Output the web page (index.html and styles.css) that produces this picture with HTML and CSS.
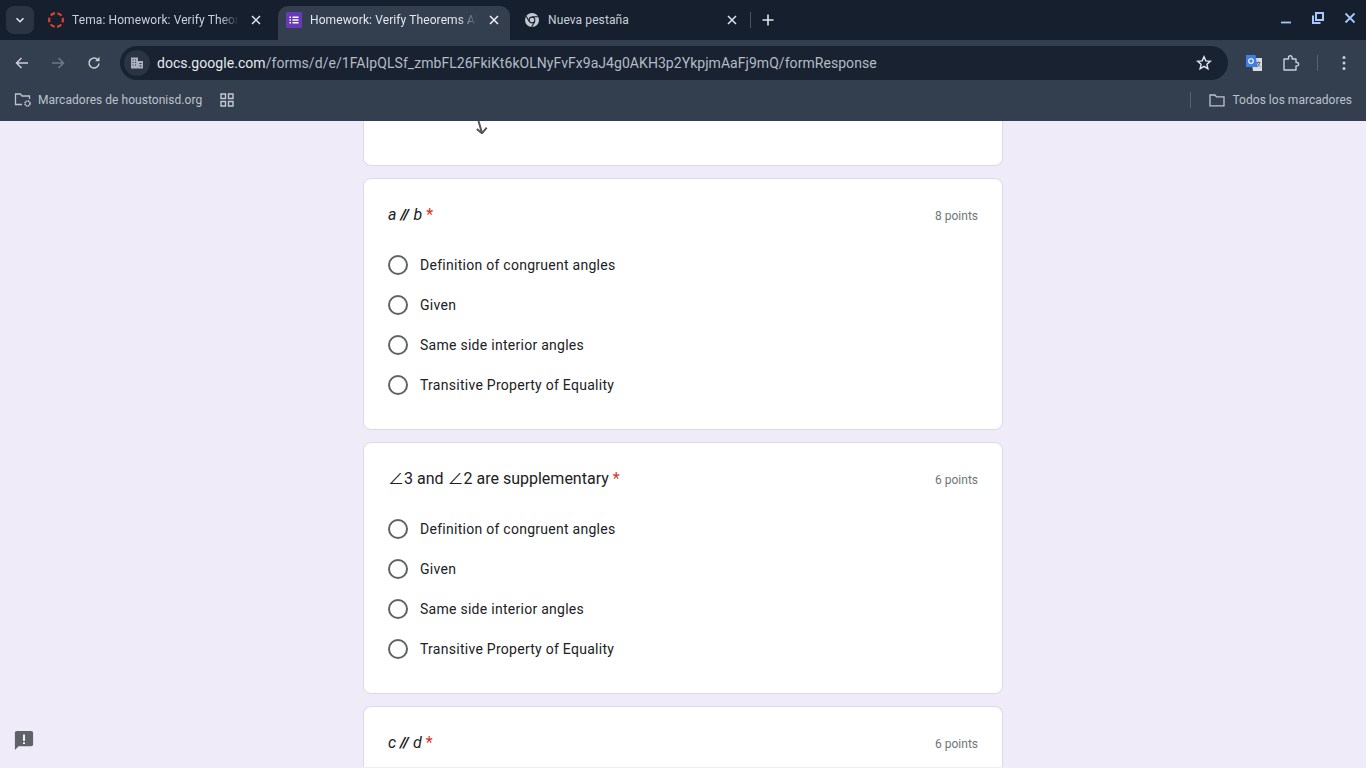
FILE: index.html
```html
<!DOCTYPE html>
<html lang="es">
<head>
    <meta charset="UTF-8">
    <title>Homework: Verify Theorems</title>
    <link rel="stylesheet" href="styles.css">
</head>
<body>
    <header class="browser">
        <div class="tab-strip">
            <button class="tab-search">
                <svg width="12" height="12" viewBox="0 0 12 12"><path d="M2.500 4.200 6 7.700l3.500-3.500" fill="none" stroke="#dfe5ee" stroke-width="1.600"/></svg>
            </button>
            <div class="tab tab-first">
                <svg class="favicon" width="16" height="16" viewBox="0 0 16 16"><circle cx="8" cy="8" r="6.900" fill="none" stroke="#dc4030" stroke-width="2.200" stroke-dasharray="4.800 2.420" stroke-dashoffset="2.400"/></svg>
                <span class="tab-title">Tema: Homework: Verify Theor</span>
                <svg class="tab-close" width="10" height="10" viewBox="0 0 10 10"><path d="M1 1l8 8M9 1 1 9" stroke="#dfe5ee" stroke-width="1.500"/></svg>
            </div>
            <div class="tab tab-active">
                <svg class="favicon" width="16" height="16" viewBox="0 0 16 16"><rect width="16" height="16" rx="1" fill="#673ab7"/><path d="M3.500 4.500H5V6H3.500zM6.500 4.500h6V6h-6zM3.500 7.300H5v1.500H3.500zM6.500 7.300h6v1.500h-6zM3.500 10H5v1.500H3.500zM6.500 10h6v1.500h-6z" fill="#fff"/></svg>
                <span class="tab-title">Homework: Verify Theorems Al</span>
                <svg class="tab-close" width="10" height="10" viewBox="0 0 10 10"><path d="M1 1l8 8M9 1 1 9" stroke="#f1f4f8" stroke-width="1.500"/></svg>
            </div>
            <div class="tab tab-last">
                <svg class="favicon" width="16" height="16" viewBox="0 0 16 16"><circle cx="8" cy="8" r="7" fill="#c3c9d2"/><circle cx="8" cy="8" r="3.400" fill="#1a2433"/><circle cx="8" cy="8" r="2.300" fill="#c3c9d2"/><path d="M8 4.800h6.300M5.200 9.600 2.200 4.200M10.800 9.600 7.600 15" stroke="#1a2433" stroke-width="1.100"/></svg>
                <span class="tab-title">Nueva pestaña</span>
                <svg class="tab-close" width="10" height="10" viewBox="0 0 10 10"><path d="M1 1l8 8M9 1 1 9" stroke="#dfe5ee" stroke-width="1.500"/></svg>
            </div>
            <span class="tab-sep"></span>
            <svg class="new-tab" width="12" height="12" viewBox="0 0 12 12"><path d="M6 .5v11M.5 6h11" stroke="#dfe5ee" stroke-width="1.600"/></svg>
            <div class="window-controls">
                <svg width="12" height="12" viewBox="0 0 12 12"><path d="M1 10.500h10" stroke="#a8c7fa" stroke-width="1.800"/></svg>
                <svg width="12" height="12" viewBox="0 0 12 12"><path d="M4 1h7v7H4zM1 3.500V11h7.500" fill="none" stroke="#a8c7fa" stroke-width="2"/></svg>
                <svg width="12" height="12" viewBox="0 0 12 12"><path d="m1.500 1.500 9 9M10.500 1.500l-9 9" stroke="#a8c7fa" stroke-width="1.800"/></svg>
            </div>
        </div>

        <div class="toolbar">
            <svg class="nav-icon" width="16" height="16" viewBox="0 0 16 16"><path d="M14 8H2.500M7.500 3l-5 5 5 5" fill="none" stroke="#c9cfd8" stroke-width="1.500"/></svg>
            <svg class="nav-icon" width="16" height="16" viewBox="0 0 16 16"><path d="M2 8h11.500M8.500 3l5 5-5 5" fill="none" stroke="#6f7986" stroke-width="1.500"/></svg>
            <svg class="nav-icon" width="16" height="16" viewBox="0 0 16 16"><path d="M13 8.500A5 5 0 1 1 11.500 4.500" fill="none" stroke="#c9cfd8" stroke-width="1.500"/><path d="M13.500 1.800v4.400H9.100z" fill="#c9cfd8"/></svg>
            <div class="omnibox">
                <span class="site-icon">
                    <svg width="14" height="14" viewBox="0 0 14 14"><path d="M1 1.500h7v11H1zM8 5h5v7.500H8z" fill="#aab2bd"/><path d="M2.500 3.500h1v1h-1zM5 3.500h1v1H5zM2.500 6h1v1h-1zM5 6h1v1H5zM2.500 8.500h1v1h-1zM5 8.500h1v1H5zM9.500 7h2v1h-2zM9.500 9.500h2v1h-2z" fill="#2a3443"/></svg>
                </span>
                <span class="url">docs.google.com<span class="url-path">/forms/d/e/1FAIpQLSf_zmbFL26FkiKt6kOLNyFvFx9aJ4g0AKH3p2YkpjmAaFj9mQ/formResponse</span></span>
                <svg class="star" width="16" height="16" viewBox="0 0 16 16"><path d="m8 1.800 1.800 4.100 4.500.4-3.400 3 1 4.400L8 11.400l-3.900 2.300 1-4.400-3.400-3 4.500-.4z" fill="none" stroke="#e3e7ed" stroke-width="1.400"/></svg>
            </div>
            <div class="toolbar-actions">
                <svg width="18" height="18" viewBox="0 0 18 18"><path d="M6 4h11v13H8z" fill="#d9dde2"/><path d="M1 1h9.500l2 12H1z" fill="#3f7de8"/><circle cx="6" cy="7" r="2.300" fill="none" stroke="#fff" stroke-width="1.100"/><path d="M11.500 8.500h4M13.500 7.500v1M12.500 8.500c.3 2 1.500 3.500 3 4.500M14.800 8.500c-.4 2-1.500 3.500-3 4.500" fill="none" stroke="#5d6570" stroke-width=".9"/></svg>
                <svg width="18" height="18" viewBox="0 0 18 18"><path d="M2 5h4.500V3.500a1.800 1.800 0 0 1 3.600 0V5H14v3.500h1a1.700 1.700 0 0 1 0 3.400h-1V16H2z" fill="none" stroke="#c9cfd8" stroke-width="1.400" stroke-linejoin="round"/></svg>
                <span class="action-sep"></span>
                <svg width="4" height="16" viewBox="0 0 4 16"><circle cx="2" cy="2.500" r="1.500" fill="#c9cfd8"/><circle cx="2" cy="8" r="1.500" fill="#c9cfd8"/><circle cx="2" cy="13.500" r="1.500" fill="#c9cfd8"/></svg>
            </div>
        </div>

        <div class="bookmarks">
            <div class="bookmark">
                <svg width="18" height="16" viewBox="0 0 18 16"><path d="M8 12.500H1.500V2h5L8 4h7.500v3" fill="none" stroke="#bcc3cd" stroke-width="1.300"/><circle cx="13.500" cy="11.500" r="2.500" fill="none" stroke="#bcc3cd" stroke-width="1.600" stroke-dasharray="1.500 .5"/></svg>
                <span>Marcadores de houstonisd.org</span>
            </div>
            <svg class="apps" width="14" height="14" viewBox="0 0 14 14"><path d="M1 1h4.500v4.500H1zM8.500 1H13v4.500H8.500zM1 8.500h4.500V13H1zM8.500 8.500H13V13H8.500z" fill="none" stroke="#c4cad3" stroke-width="1.400"/></svg>
            <div class="bookmarks-right">
                <span class="bookmark-sep"></span>
                <svg width="16" height="14" viewBox="0 0 16 14"><path d="M1 2h5l1.500 1.800H15v9H1z" fill="none" stroke="#bcc3cd" stroke-width="1.300"/></svg>
                <span>Todos los marcadores</span>
            </div>
        </div>
    </header>

    <main class="form-page">
        <div class="card card-cut">
            <svg width="12" height="13" viewBox="0 0 12 13"><path d="M2.500 0 6 12M.8 8 6 12.300l4.700-5.600" fill="none" stroke="#555" stroke-width="2"/></svg>
        </div>

        <section class="card">
            <div class="question">
                <span class="q-title"><i>a</i> <i class="par">//</i> <i>b</i> <span class="req">*</span></span>
                <span class="points">8 points</span>
            </div>
            <label class="option"><span class="radio"></span>Definition of congruent angles</label>
            <label class="option"><span class="radio"></span>Given</label>
            <label class="option"><span class="radio"></span>Same side interior angles</label>
            <label class="option"><span class="radio"></span>Transitive Property of Equality</label>
        </section>

        <section class="card">
            <div class="question">
                <span class="q-title"><span class="ang">∠</span>3 and <span class="ang">∠</span>2 are supplementary <span class="req">*</span></span>
                <span class="points">6 points</span>
            </div>
            <label class="option"><span class="radio"></span>Definition of congruent angles</label>
            <label class="option"><span class="radio"></span>Given</label>
            <label class="option"><span class="radio"></span>Same side interior angles</label>
            <label class="option"><span class="radio"></span>Transitive Property of Equality</label>
        </section>

        <section class="card card-last">
            <div class="question">
                <span class="q-title"><i>c</i> <i class="par">//</i> <i>d</i> <span class="req">*</span></span>
                <span class="points">6 points</span>
            </div>
        </section>
    </main>

    <svg class="report" width="20" height="20" viewBox="0 0 22 22"><path d="M3 1h16a2 2 0 0 1 2 2v13a2 2 0 0 1-2 2H5l-4 4V3a2 2 0 0 1 2-2z" fill="#5f6368"/><path d="M10 5h2v7h-2zM10 13.500h2v2h-2z" fill="#fff"/></svg>
</body>
</html>
```

FILE: styles.css
```css
body, html {
    margin: 0;
    padding: 0;
    height: 100%;
    overflow: hidden;
    background-color: #f0ebf8;
    font-family: 'Roboto', sans-serif;
}
body {
    display: flex;
    flex-direction: column;
}

/* browser chrome */
.browser {
    flex: none;
    height: 121px;
    background-color: #333e4e;
}
.tab-strip {
    display: flex;
    align-items: center;
    height: 40px;
    padding-left: 6px;
    background-color: #151f2e;
    color: #c9d0da;
    font-size: 12px;
}
.tab-search {
    flex: none;
    width: 28px;
    height: 28px;
    padding: 0;
    margin-right: 2px;
    border: 0;
    border-radius: 8px;
    background-color: #2a3443;
    display: flex;
    align-items: center;
    justify-content: center;
}
.tab {
    flex: none;
    box-sizing: border-box;
    display: flex;
    align-items: center;
    height: 34px;
    margin-top: 6px;
    padding-bottom: 6px;
}
.tab-first {
    width: 242px;
    padding-left: 12px;
    padding-right: 17px;
}
.tab-active {
    width: 232px;
    padding-left: 8px;
    padding-right: 11px;
    background-color: #333e4e;
    border-radius: 10px 10px 0 0;
    color: #e3e7ed;
}
.tab-last {
    width: 238px;
    padding-left: 14px;
    padding-right: 11px;
}
.favicon {
    flex: none;
    margin-right: 8px;
}
.tab-title {
    flex: 1;
    min-width: 0;
    overflow: hidden;
    white-space: nowrap;
    letter-spacing: .1px;
    -webkit-mask-image: linear-gradient(to left, transparent 0, #000 18px);
    mask-image: linear-gradient(to left, transparent 0, #000 18px);
}
.tab-last .tab-title {
    -webkit-mask-image: none;
    mask-image: none;
}
.tab-close {
    flex: none;
    margin-left: 12px;
}
.tab-sep {
    flex: none;
    width: 1px;
    height: 16px;
    margin-left: 2px;
    background-color: #4a5463;
}
.new-tab {
    flex: none;
    margin-left: 11px;
}
.window-controls {
    margin-left: auto;
    display: flex;
    align-items: center;
    gap: 20px;
    padding-right: 10px;
    margin-top: -4px;
}

.toolbar {
    display: flex;
    align-items: center;
    box-sizing: border-box;
    height: 44px;
    padding: 2px 0 0 14px;
    gap: 20px;
}
.omnibox {
    flex: none;
    display: flex;
    align-items: center;
    box-sizing: border-box;
    width: 1108px;
    height: 34px;
    margin-left: -2px;
    padding: 0 16px 0 4px;
    background-color: #182231;
    border-radius: 17px;
    font-size: 14px;
}
.site-icon {
    flex: none;
    width: 26px;
    height: 26px;
    margin-right: 7px;
    border-radius: 50%;
    background-color: #2a3443;
    display: flex;
    align-items: center;
    justify-content: center;
}
.url {
    flex: 1;
    white-space: nowrap;
    color: #e6e9ee;
    letter-spacing: .05px;
}
.url-path {
    color: #b4bbc5;
}
.toolbar-actions {
    display: flex;
    align-items: center;
    margin-left: -3px;
}
.toolbar-actions svg:nth-child(2) {
    margin-left: 19px;
}
.action-sep {
    width: 1px;
    height: 16px;
    margin: 0 24px 0 17px;
    background-color: #556070;
}

.bookmarks {
    display: flex;
    align-items: center;
    box-sizing: border-box;
    height: 37px;
    padding: 0 14px 5px;
    color: #bcc3cd;
    font-size: 12px;
}
.bookmark {
    display: flex;
    align-items: center;
    gap: 6px;
    letter-spacing: .04px;
}
.apps {
    margin-left: 18px;
}
.bookmarks-right {
    margin-left: auto;
    display: flex;
    align-items: center;
    gap: 8px;
    letter-spacing: .02px;
}
.bookmark-sep {
    width: 1px;
    height: 16px;
    margin-right: 10px;
    background-color: #556070;
}

/* form */
.form-page {
    flex: 1;
    min-height: 0;
    overflow: hidden;
    width: 640px;
    margin: 0 auto;
    display: flex;
    flex-direction: column;
    gap: 12px;
    color: #202124;
}
.card {
    flex: none;
    box-sizing: border-box;
    background-color: #fff;
    border: 1px solid #dadce0;
    border-radius: 8px;
    padding: 24px;
    height: 252px;
}
.card-cut {
    height: 45px;
    padding: 0 0 0 112px;
    border-top: 0;
    border-radius: 0 0 8px 8px;
}
.card-cut svg {
    display: block;
}
.card-last {
    height: 61px;
    border-bottom: 0;
    border-radius: 8px 8px 0 0;
}
.question {
    display: flex;
    justify-content: space-between;
    align-items: center;
    height: 24px;
    margin-bottom: 18px;
}
.q-title {
    font-size: 16px;
    line-height: 24px;
}
.ang {
    font-family: 'Noto Sans CJK SC', sans-serif;
    line-height: 1;
}
.req {
    color: #d93025;
}
.par {
    font-size: 15px;
    font-weight: 700;
    letter-spacing: -.5px;
    margin-right: 1px;
}
.points {
    margin-top: 2px;
    font-size: 12px;
    color: #70757a;
}
.option {
    display: flex;
    align-items: center;
    height: 40px;
    font-size: 14px;
    letter-spacing: .27px;
}
.radio {
    flex: none;
    box-sizing: border-box;
    width: 20px;
    height: 20px;
    margin-right: 12px;
    border: 2px solid #5f6368;
    border-radius: 50%;
}
.report {
    position: absolute;
    left: 14px;
    top: 730px;
}
```
